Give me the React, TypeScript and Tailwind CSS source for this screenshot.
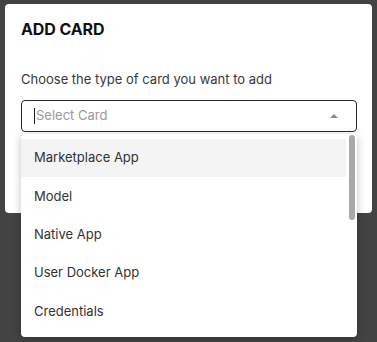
import React from "react";

const items = ["Marketplace App", "Model", "Native App", "User Docker App", "Credentials"];

export default function App() {
  return (
    <div
      className="h-[342px] w-[377px] bg-[#434343] pt-[4px] pl-[5px] overflow-hidden"
      style={{ fontFamily: "Inter, 'Noto Sans', sans-serif" }}
    >
      <div className="w-[367px] h-[209px] bg-white rounded-[4px] px-[16px] pt-[15px]">
        <h2 className="text-[16px] leading-[20px] font-bold text-[#111] tracking-[-0.1px]">ADD CARD</h2>
        <p className="mt-[32px] text-[13px] leading-[16px] text-[#3a3a3a]">
          Choose the type of card you want to add
        </p>
        <div className="relative mt-[13px] w-[336px]">
          <div className="h-[32px] border border-[#2a2a2a] rounded-[4px] flex items-center pl-[12px] pr-[18px]">
            <span className="w-px h-[16px] bg-[#222]" />
            <span className="text-[13px] text-[#9a9a9a] ml-[1px]">Select Card</span>
            <span className="ml-auto w-0 h-0 border-l-[4px] border-r-[4px] border-b-[4px] border-l-transparent border-r-transparent border-b-[#8a8a8a]" />
          </div>
          <div className="absolute left-0 top-[34px] w-[336px] h-[203px] bg-white rounded-[4px] shadow-[0_2px_8px_rgba(0,0,0,0.25)] flex overflow-hidden">
            <ul className="flex-1 pt-[5px]">
              {items.map((it, i) => (
                <li
                  key={it}
                  className={`h-[38.3px] flex items-center pl-[13px] text-[13px] text-[#333] ${
                    i === 0 ? "bg-[#f4f4f4]" : ""
                  }`}
                >
                  {it}
                </li>
              ))}
            </ul>
            <div className="w-[11px] pt-[1px] flex justify-center">
              <div className="w-[6px] h-[85px] rounded-full bg-[#a9a9a9]" />
            </div>
          </div>
        </div>
      </div>
    </div>
  );
}
